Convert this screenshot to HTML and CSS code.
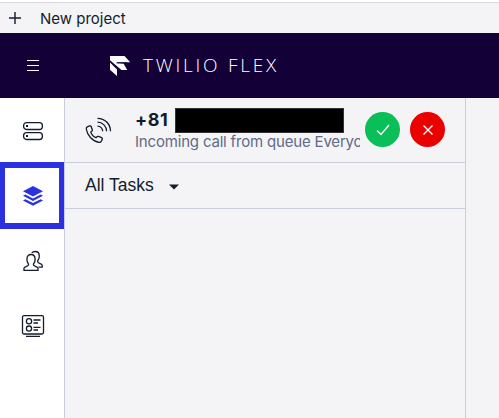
FILE: index.html
```html
<!DOCTYPE html>
<html lang="en">
<head>
<meta charset="utf-8">
<title>Twilio Flex</title>
<link rel="stylesheet" href="styles.css">
</head>
<body>
<div class="project-bar">
  <svg class="plus" width="14" height="14" viewBox="0 0 14 14"><path d="M7 1v12M1 7h12"/></svg>
  <span class="project-label">New project</span>
</div>
<header class="topbar">
  <svg class="menu" width="14" height="14" viewBox="0 0 14 14"><path d="M1 1.500h12M1 6.500h12M1 11.500h12"/></svg>
  <svg class="logo" width="21" height="21" viewBox="0 0 21 21"><path d="M0 0h14.500l5.700 6.200H7.800L6.500 7.100 12 7.500h1.500l3.700 6.500H11.500L0 4.200z"/><path d="M0 6.600l7 6.800V20L0 13.700z"/><path class="logo-cut" d="M6.500 6.900h10"/></svg>
  <span class="brand">TWILIO FLEX</span>
</header>
<div class="body">
  <nav class="rail">
    <a class="rail-item">
      <svg width="22" height="20" viewBox="0 0 22 20"><rect x="1.600" y="1.700" width="18.800" height="6.800" rx="3"/><rect x="1.600" y="11.700" width="18.800" height="6.800" rx="3"/><path class="solid" d="M4 4h2v2H4zM4 14h2v2H4z"/></svg>
    </a>
    <a class="rail-item selected">
      <svg width="20" height="20" viewBox="0 0 20 20"><path d="M10 0l10 5.300-10 5.300L0 5.300z"/><path d="M0 9.800l2.400-1.200L10 12.500l7.600-3.900L20 9.800 10 15z"/><path d="M0 14.400l2.400-1.200L10 17.100l7.600-3.900L20 14.400 10 19.700z"/></svg>
    </a>
    <a class="rail-item">
      <svg width="22" height="22" viewBox="0 0 22 22"><path d="M2 20.400v-2.200c0-1.500 4.600-1.700 4.600-3.700 0-1.200-1.700-2.100-1.700-5.100 0-3.200 1.600-4.900 4.100-4.900s4.100 1.700 4.100 4.900c0 3-1.700 3.900-1.700 5.100 0 2 4.600 2.200 4.600 3.700v2.200z"/><path d="M9.800 3C10.500 2 11.600 1.500 13.200 1.500c2.500 0 4.100 1.700 4.100 4.700s-1.700 3.900-1.700 5.300c0 2 4.600 2.200 4.600 3.700v2h-3.700"/></svg>
    </a>
    <a class="rail-item">
      <svg width="24" height="24" viewBox="0 0 24 24"><rect x="1.500" y="1.700" width="21" height="18.300" rx="1.500"/><circle cx="8" cy="7.300" r="2.600"/><circle cx="8" cy="14.600" r="2.600"/><path d="M12.500 6h7M12.500 9h4.500M12.500 13.300h7M12.500 16h4.500M5 22.300h14"/></svg>
    </a>
  </nav>
  <main class="tasks">
    <section class="call">
      <svg class="phone" width="27" height="27" viewBox="0 0 27 27"><path d="M2.300 9.800 4.500 8.900c.8-.3 1.400 0 1.700.8l1.100 3c.2.700 0 1.200-.5 1.600l-1 .8c.6 2.200 3 4.600 5.200 5.600l1-1c.4-.4 1-.5 1.600-.3l3 1.300c.7.300.9 1 .6 1.700l-.9 1.900c-.4.900-1.200 1.300-2.200 1.100C7.700 24.400 2.200 18.500 1.300 12c-.1-1 .2-1.800 1-2.200z"/><path d="M12.500 1.300c7.300 0 13 5.700 13 13M12.500 5.200c5.100 0 9.100 4 9.100 9.100M12.500 9.100c2.900 0 5.200 2.300 5.200 5.200"/></svg>
      <div class="call-text">
        <div class="number"><span class="prefix">+81</span><span class="redacted"></span></div>
        <div class="queue">Incoming call from queue Everyone</div>
      </div>
      <button class="action accept" aria-label="Accept"><svg width="14" height="12" viewBox="0 0 14 12"><path d="M1 6.500l4 4L13 1"/></svg></button>
      <button class="action reject" aria-label="Reject"><svg width="12" height="12" viewBox="0 0 12 12"><path d="M1.500 1.500l9 9M10.500 1.500l-9 9"/></svg></button>
    </section>
    <section class="filter">
      <span>All Tasks</span>
      <svg width="10" height="6" viewBox="0 0 10 6"><path d="M0 .5h10L5 5.500z"/></svg>
    </section>
  </main>
</div>
</body>
</html>
```
FILE: styles.css
```css
* { box-sizing: border-box; }
body {
  margin: 0;
  height: 418px;
  padding-top: 2px;
  overflow: hidden;
  background: #fff;
  color: #121c2d;
  font-family: Inter, "Liberation Sans", sans-serif;
}
svg { display: block; flex: none; fill: none; stroke: #121c2d; stroke-width: 1.3; }
.project-bar {
  display: flex;
  align-items: center;
  height: 31px;
  padding-left: 8px;
  border-top: 1px solid #d9d9df;
  background: #f4f4f6;
}
.plus { stroke-width: 1.4; }
.project-label { margin-left: 18px; font-size: 15px; white-space: nowrap; }
.topbar {
  display: flex;
  align-items: center;
  height: 65px;
  padding-left: 26px;
  background: #120037;
}
.menu { stroke: #fff; stroke-width: 1.1; }
.logo { margin: 1px 0 0 70px; fill: #fff; stroke: none; }
.logo .logo-cut { stroke: #120037; stroke-width: .9; }
.brand {
  margin: -1px 0 0 12px;
  color: #fff;
  font: 300 19px/24px "Open Sans", sans-serif;
  letter-spacing: 2.75px;
  white-space: nowrap;
}
.body { display: flex; height: 320px; background: #f4f4f6; }
.rail {
  width: 65px;
  border-right: 1px solid #cacddb;
  background: #fff;
}
.rail-item {
  display: flex;
  align-items: center;
  justify-content: center;
  width: 65px;
  height: 65px;
}
.rail-item .solid { fill: #121c2d; stroke: none; }
.selected {
  width: 64px;
  height: 67px;
  margin: -1px 0;
  padding-left: 2px;
  border: solid #2b31df;
  border-width: 6px 5px;
}
.selected svg { margin-top: 1px; fill: #2b31df; stroke: none; }
.tasks { width: 401px; border-right: 1px solid #cacddb; }
.call {
  display: flex;
  align-items: center;
  height: 65px;
  padding-left: 20px;
  border-bottom: 1px solid #cacddb;
}
.call-text { width: 225px; margin-left: 23px; overflow: hidden; }
.number { display: flex; align-items: center; height: 24px; }
.prefix { width: 40px; margin-top: -1px; font-size: 18px; font-weight: 700; letter-spacing: .5px; }
.redacted { width: 169px; height: 25px; background: #000; border: 1px solid #333; }
.queue { height: 20px; color: #606b85; font-size: 15px; line-height: 19px; letter-spacing: -.18px; white-space: nowrap; }
.action {
  display: flex;
  align-items: center;
  justify-content: center;
  width: 35px;
  height: 35px;
  margin: -1px 0 0 10px;
  padding: 0;
  border: 0;
  border-radius: 50%;
}
.action svg { stroke: #fff; stroke-width: 1.4; }
.accept { margin-left: 5px; background: #08bf58; }
.reject { background: #eb0000; }
.filter {
  display: flex;
  align-items: center;
  height: 46px;
  padding-left: 20px;
  border-bottom: 1px solid #cacddb;
  font: 17.500px "Liberation Sans", Arial, sans-serif;
}
.filter svg { margin: 2px 0 0 15px; fill: #121c2d; stroke: none; }
```
